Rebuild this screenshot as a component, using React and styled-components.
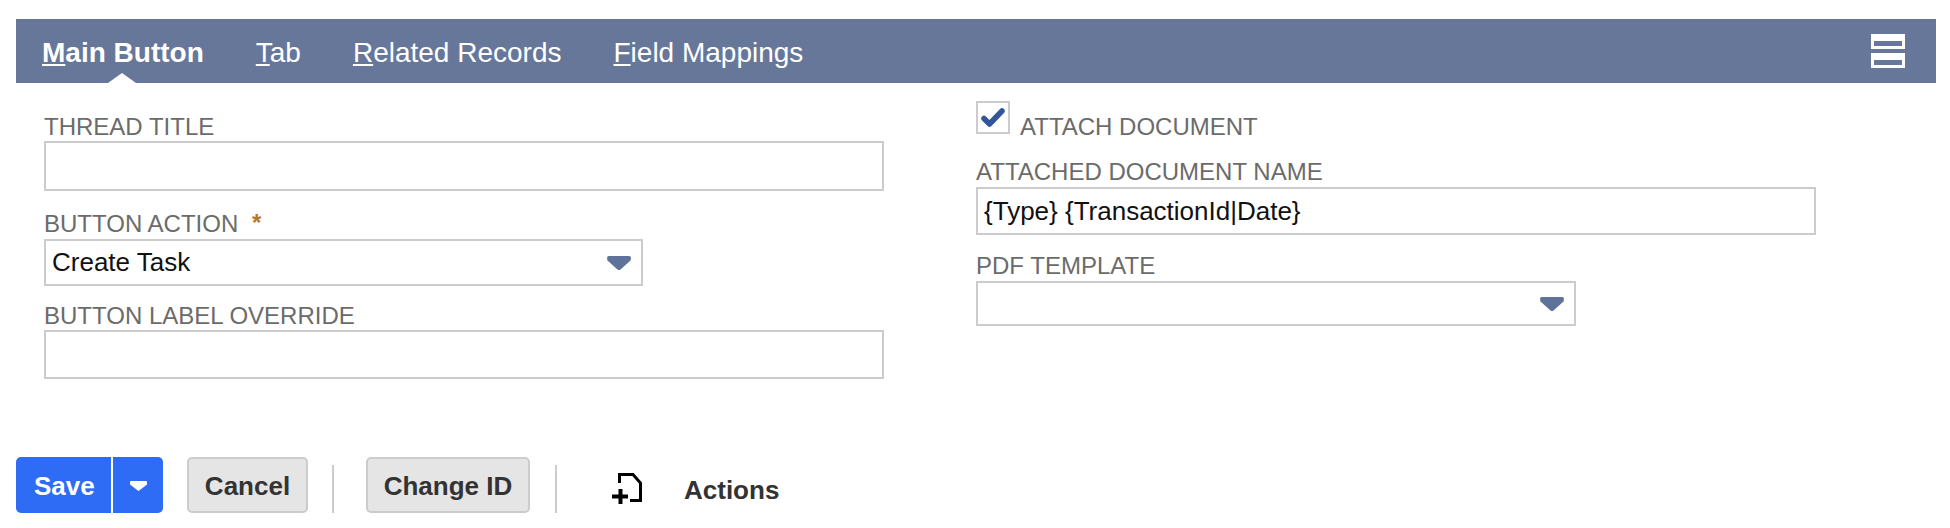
import React from 'react'
import styled, { createGlobalStyle } from 'styled-components'

const GlobalStyle = createGlobalStyle`
  html, body {
    margin: 0;
    background: #fff;
    font-family: "Liberation Sans", Arial, sans-serif;
  }
`

const tabs = [
  { key: 'M', rest: 'ain Button', active: true },
  { key: 'T', rest: 'ab' },
  { key: 'R', rest: 'elated Records' },
  { key: 'F', rest: 'ield Mappings' },
]

function Arrow() {
  return (
    <ArrowIcon width="24" height="14" viewBox="0 0 24 14">
      <path d="M2 0H22Q24 0 24 2L23.5 4.5L13.5 13.5Q12 14.5 10.5 13.5L0.5 4.5L0 2Q0 0 2 0Z" fill="#5f7299" />
    </ArrowIcon>
  )
}

export default function App() {
  return (
    <Page>
      <GlobalStyle />
      <TabBar>
        <TabList>
          {tabs.map((t) => (
            <TabItem key={t.key} $active={t.active}>
              <u>{t.key}</u>{t.rest}
            </TabItem>
          ))}
        </TabList>
        <LayoutIcon>
          <span />
          <span />
        </LayoutIcon>
      </TabBar>

      <Form>
        <Column $top={33} $left={44}>
          <Label>THREAD TITLE</Label>
          <TextInput $width={840} $height={50} readOnly value="" />
          <Label $top={22} $gap={4}>
            BUTTON ACTION <Required>*</Required>
          </Label>
          <SelectBox $width={599} $height={47}>
            <span>Create Task</span>
            <Arrow />
          </SelectBox>
          <Label $top={19}>BUTTON LABEL OVERRIDE</Label>
          <TextInput $width={840} $height={49} readOnly value="" />
        </Column>

        <Column $top={18}>
          <CheckRow>
            <CheckBox>
              <svg width="30" height="30" viewBox="0 0 30 30">
                <path d="M6 15.5L11.5 21L24 8" fill="none" stroke="#33569b" strokeWidth="5.5" strokeLinejoin="round" strokeLinecap="round" />
              </svg>
            </CheckBox>
            <CheckLabel>ATTACH DOCUMENT</CheckLabel>
          </CheckRow>
          <Label $top={27} $gap={4}>ATTACHED DOCUMENT NAME</Label>
          <TextInput $width={840} $height={48} readOnly value="{Type} {TransactionId|Date}" />
          <Label $top={20} $gap={4}>PDF TEMPLATE</Label>
          <SelectBox $width={600} $height={45}>
            <span />
            <Arrow />
          </SelectBox>
        </Column>
      </Form>

      <Toolbar>
        <SaveGroup>
          <SaveButton>Save</SaveButton>
          <SaveCaret>
            <svg width="17" height="10" viewBox="0 0 17 10">
              <path d="M1 0H16Q17 0 17 1V3.5L8.5 10L0 3.5V1Q0 0 1 0Z" fill="#fff" />
            </svg>
          </SaveCaret>
        </SaveGroup>
        <GreyButton $width={121}>Cancel</GreyButton>
        <Separator $left={24} />
        <GreyButton $width={164} $left={32}>Change ID</GreyButton>
        <Separator $left={25} />
        <ActionsIcon width="32" height="34" viewBox="0 0 32 34">
          <path d="M8.5 11V2.5H22L29.5 11V28.5H19" fill="none" stroke="#000" strokeWidth="3" />
          <path d="M1 24.5H17M9.5 17V32" fill="none" stroke="#000" strokeWidth="4" />
        </ActionsIcon>
        <ActionsLabel>Actions</ActionsLabel>
      </Toolbar>
    </Page>
  )
}

const Page = styled.div`
  width: 1950px;
  height: 528px;
  overflow: hidden;
  padding-top: 19px;
  box-sizing: border-box;
`

const TabBar = styled.div`
  margin: 0 14px 0 16px;
  height: 64px;
  background: #67779a;
  display: flex;
  align-items: center;
  justify-content: space-between;
`

const TabList = styled.div`
  display: flex;
  gap: 52px;
  padding-left: 26px;
`

const TabItem = styled.div`
  position: relative;
  color: #fff;
  font-size: 28px;
  height: 64px;
  line-height: 67px;
  font-weight: ${(p) => (p.$active ? 700 : 400)};

  ${(p) =>
    p.$active &&
    `&::after {
      content: '';
      position: absolute;
      left: 66px;
      bottom: 0;
      border-left: 14px solid transparent;
      border-right: 14px solid transparent;
      border-bottom: 10px solid #fff;
    }`}
`

const LayoutIcon = styled.div`
  display: flex;
  flex-direction: column;
  gap: 4px;
  margin-right: 31px;

  span {
    display: block;
    width: 34px;
    height: 15px;
    box-sizing: border-box;
    border: 3px solid #fff;
    border-top-width: 7px;
  }
`

const Form = styled.div`
  display: grid;
  grid-template-columns: 976px 1fr;
  height: 296px;
`

const Column = styled.div`
  padding-top: ${(p) => p.$top}px;
  padding-left: ${(p) => p.$left || 0}px;
`

const Label = styled.div`
  margin-top: ${(p) => p.$top || 0}px;
  margin-bottom: ${(p) => p.$gap || 3}px;
  height: 22px;
  line-height: 22px;
  font-size: 24px;
  color: #6b6b6b;
  white-space: nowrap;
`

const Required = styled.span`
  color: #b5782a;
  font-weight: 700;
  margin-left: 7px;
  position: relative;
  top: -1px;
`

const TextInput = styled.input`
  display: block;
  box-sizing: border-box;
  width: ${(p) => p.$width}px;
  height: ${(p) => p.$height}px;
  border: 2px solid #cccccc;
  outline: none;
  padding: 0 6px;
  margin: 0;
  font-family: "Liberation Sans", Arial, sans-serif;
  font-size: 26px;
  color: #111;
  background: #fff;
  border-radius: 0;
`

const SelectBox = styled.div`
  box-sizing: border-box;
  width: ${(p) => p.$width}px;
  height: ${(p) => p.$height}px;
  border: 2px solid #cccccc;
  padding: 0 10px 0 6px;
  display: flex;
  align-items: center;
  justify-content: space-between;
  font-size: 26px;
  color: #111;
`

const ArrowIcon = styled.svg`
  display: block;
`

const CheckRow = styled.div`
  display: flex;
  align-items: flex-start;
  gap: 10px;
  height: 33px;
`

const CheckBox = styled.div`
  width: 34px;
  height: 33px;
  box-sizing: border-box;
  border: 2px solid #cccccc;
`

const CheckLabel = styled.div`
  margin-top: 15px;
  line-height: 22px;
  font-size: 24px;
  color: #6b6b6b;
  white-space: nowrap;
`

const Toolbar = styled.div`
  display: flex;
  align-items: flex-start;
  padding-left: 16px;
  margin-top: 78px;
`

const SaveGroup = styled.div`
  display: flex;
  width: 147px;
  height: 56px;
  border-radius: 5px;
  background: #2e6cf6;
  color: #fff;
`

const SaveButton = styled.div`
  width: 97px;
  padding-left: 18px;
  box-sizing: border-box;
  font-size: 26px;
  font-weight: 700;
  line-height: 58px;
  border-right: 2px solid #fff;
`

const SaveCaret = styled.div`
  flex: 1;
  display: flex;
  align-items: center;
  justify-content: center;
  padding-top: 1px;
`

const GreyButton = styled.div`
  box-sizing: border-box;
  width: ${(p) => p.$width}px;
  height: 56px;
  margin-left: ${(p) => p.$left || 24}px;
  border: 2px solid #cccccc;
  border-radius: 5px;
  background: #e5e5e5;
  color: #333;
  font-size: 26px;
  font-weight: 700;
  line-height: 54px;
  text-align: center;
`

const Separator = styled.div`
  width: 2px;
  height: 48px;
  margin-top: 8px;
  margin-left: ${(p) => p.$left}px;
  background: #cccccc;
`

const ActionsIcon = styled.svg`
  display: block;
  margin-top: 15px;
  margin-left: 54px;
`

const ActionsLabel = styled.div`
  margin-left: 41px;
  margin-top: 16px;
  font-size: 26px;
  font-weight: 700;
  line-height: 34px;
  color: #333;
`
